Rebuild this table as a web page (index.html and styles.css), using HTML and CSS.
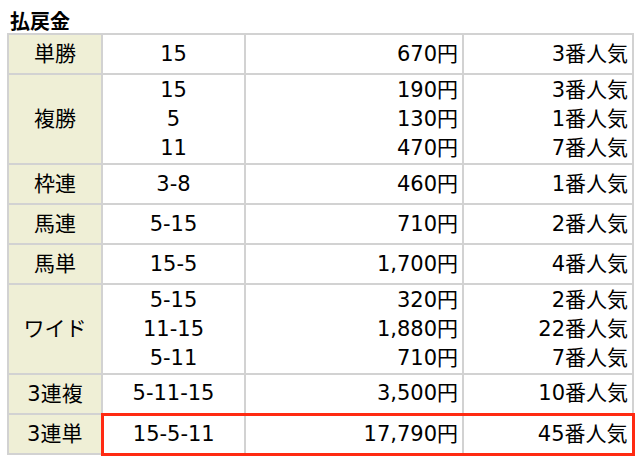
FILE: index.html
```html
<!DOCTYPE html>
<html lang="ja">
<head>
<meta charset="utf-8">
<link rel="stylesheet" href="styles.css">
</head>
<body>
<h2 class="title">払戻金</h2>
<table class="payout">
  <colgroup>
    <col class="c-type">
    <col class="c-num">
    <col class="c-yen">
    <col class="c-pop">
  </colgroup>
  <tbody>
    <tr class="single">
      <th>単勝</th>
      <td class="num">15</td>
      <td class="yen">670円</td>
      <td class="pop">3番人気</td>
    </tr>
    <tr class="multi">
      <th>複勝</th>
      <td class="num"><div>15</div><div>5</div><div>11</div></td>
      <td class="yen"><div>190円</div><div>130円</div><div>470円</div></td>
      <td class="pop"><div>3番人気</div><div>1番人気</div><div>7番人気</div></td>
    </tr>
    <tr class="single">
      <th>枠連</th>
      <td class="num">3-8</td>
      <td class="yen">460円</td>
      <td class="pop">1番人気</td>
    </tr>
    <tr class="single">
      <th>馬連</th>
      <td class="num">5-15</td>
      <td class="yen">710円</td>
      <td class="pop">2番人気</td>
    </tr>
    <tr class="single">
      <th>馬単</th>
      <td class="num">15-5</td>
      <td class="yen">1,700円</td>
      <td class="pop">4番人気</td>
    </tr>
    <tr class="multi">
      <th>ワイド</th>
      <td class="num"><div>5-15</div><div>11-15</div><div>5-11</div></td>
      <td class="yen"><div>320円</div><div>1,880円</div><div>710円</div></td>
      <td class="pop"><div>2番人気</div><div>22番人気</div><div>7番人気</div></td>
    </tr>
    <tr class="single">
      <th>3連複</th>
      <td class="num">5-11-15</td>
      <td class="yen">3,500円</td>
      <td class="pop">10番人気</td>
    </tr>
    <tr class="single highlight">
      <th>3連単</th>
      <td class="num">15-5-11</td>
      <td class="yen">17,790円</td>
      <td class="pop">45番人気</td>
    </tr>
  </tbody>
</table>
</body>
</html>
```

FILE: styles.css
```css
html, body {
  margin: 0;
  padding: 0;
  background: #fff;
}
body {
  padding: 7px 7px 0 7px;
  font-family: "DejaVu Sans", "Noto Sans CJK JP", sans-serif;
  color: #000;
}
.title {
  margin: 0 0 0 3px;
  padding-top: 1px;
  font-family: "Noto Sans CJK JP", sans-serif;
  font-size: 20px;
  line-height: 25px;
  font-weight: bold;
  height: 25px;
}
.payout {
  border-collapse: collapse;
  table-layout: fixed;
  width: 627px;
  font-size: 21px;
}
.c-type { width: 94px; }
.c-num { width: 143px; }
.c-yen { width: 218px; }
.c-pop { width: 170px; }
.payout th,
.payout td {
  border: 2px solid #d2d2d2;
  padding: 0 4px;
  line-height: 29px;
  vertical-align: middle;
  font-weight: normal;
}
.payout tr.single { height: 40px; }
.payout tr.multi { height: 90px; }
.payout th {
  background: #efefd6;
  text-align: center;
}
.payout td.num { text-align: center; }
.payout td.yen { text-align: right; }
.payout td.pop { text-align: right; }

.payout tr.highlight td {
  border-top: 3px solid #ff2a12;
  border-bottom: 3px solid #ff2a12;
}
.payout tr.highlight td.num { border-left: 3px solid #ff2a12; }
.payout tr.highlight td.pop { border-right: 3px solid #ff2a12; }
```
